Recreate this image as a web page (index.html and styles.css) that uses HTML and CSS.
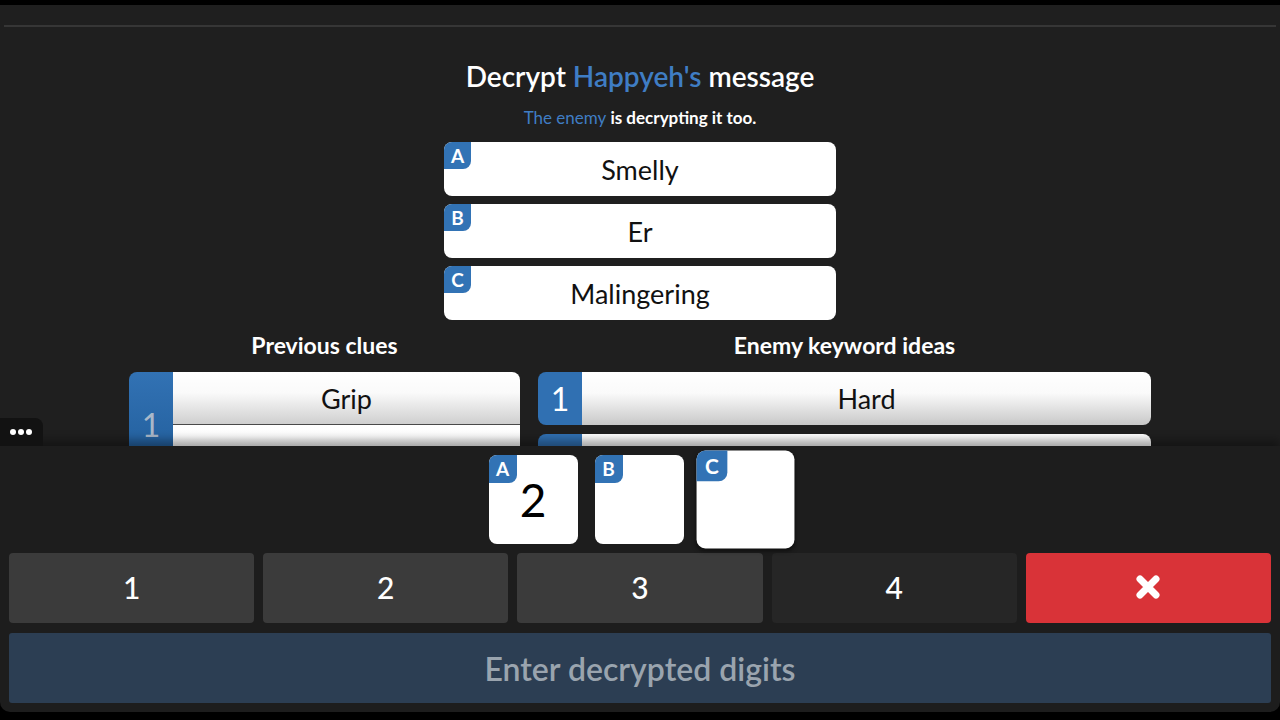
FILE: index.html
```html
<!DOCTYPE html>
<html lang="en">
<head>
  <meta charset="UTF-8">
  <title>Decrypt</title>
  <link rel="stylesheet" href="styles.css">
</head>
<body>
  <div class="screen">
    <div class="topbar"></div>
    <div class="board">
      <hr class="divider">
      <h1 class="title">Decrypt <span class="blue">Happyeh's</span> message</h1>
      <p class="subtitle"><span class="blue light">The enemy</span> is decrypting it too.</p>

      <div class="clues">
        <div class="clue"><span class="badge">A</span>Smelly</div>
        <div class="clue"><span class="badge">B</span>Er</div>
        <div class="clue"><span class="badge">C</span>Malingering</div>
      </div>

      <div class="columns">
        <div class="col">
          <h2>Previous clues</h2>
          <div class="group">
            <div class="group-num">1</div>
            <div class="group-rows">
              <div class="row">Grip</div>
              <div class="row"></div>
            </div>
          </div>
        </div>
        <div class="col">
          <h2>Enemy keyword ideas</h2>
          <div class="idea"><span class="idea-num">1</span><span class="idea-text">Hard</span></div>
          <div class="idea"><span class="idea-num"></span><span class="idea-text"></span></div>
        </div>
      </div>
    </div>

    <div class="panel">
      <div class="more"><span></span><span></span><span></span></div>
      <div class="slots">
        <div class="slot"><span class="badge">A</span>2</div>
        <div class="slot"><span class="badge">B</span></div>
        <div class="slot hover"><span class="badge">C</span></div>
      </div>
      <div class="keypad">
        <button class="key">1</button>
        <button class="key">2</button>
        <button class="key">3</button>
        <button class="key used">4</button>
        <button class="key clear">
          <svg width="26" height="26" viewBox="0 0 26 26"><path d="M5 5 L21 21 M21 5 L5 21" stroke="#fff" stroke-width="7" stroke-linecap="round"/></svg>
        </button>
      </div>
      <button class="submit">Enter decrypted digits</button>
    </div>
  </div>
</body>
</html>
```

FILE: styles.css
```css
* {
  box-sizing: border-box;
}
html, body {
  margin: 0;
  height: 100%;
}
body {
  background: #000;
  font-family: Lato, "Open Sans", sans-serif;
  color: #fff;
  overflow: hidden;
}
.screen {
  height: 720px;
  display: flex;
  flex-direction: column;
}
.topbar {
  height: 5px;
  background: #000;
  flex: none;
}
.board {
  height: 441px;
  flex: none;
  overflow: hidden;
  background: #1f1f1f;
  padding: 20px 4px 0;
  text-align: center;
}
.divider {
  border: none;
  border-top: 2px solid #363636;
  margin: 0;
}
.blue {
  color: #3f7dc4;
}
.light {
  font-weight: 400;
}
.title {
  font-size: 28px;
  font-weight: 600;
  margin: 31px 0 0;
  line-height: 36px;
}
.subtitle {
  font-size: 17px;
  font-weight: 700;
  margin: 14px 0 0;
  line-height: 20px;
}
.clues {
  width: 392px;
  margin: 14px auto 0;
  display: flex;
  flex-direction: column;
  gap: 8px;
}
.clue {
  position: relative;
  height: 54px;
  background: #fff;
  border-radius: 8px;
  color: #111;
  font-size: 27px;
  line-height: 56px;
}
.badge {
  position: absolute;
  left: 0;
  top: 0;
  width: 27px;
  height: 27px;
  background: #3273b5;
  color: #fff;
  font-size: 19px;
  font-weight: 700;
  line-height: 27px;
  text-align: center;
  border-radius: 8px 0 8px 0;
}
.columns {
  display: grid;
  grid-template-columns: 391px 613px;
  gap: 18px;
  justify-content: center;
  margin-top: 12px;
}
.col h2 {
  font-size: 23px;
  font-weight: 700;
  margin: 0 0 14px;
  line-height: 26px;
}
.group {
  display: flex;
  border-radius: 8px;
  overflow: hidden;
}
.group-num {
  width: 44px;
  background: linear-gradient(#3272b4, #1f5b98);
  color: #a9b8c9;
  font-size: 32px;
  display: flex;
  align-items: flex-end;
  justify-content: center;
  padding-bottom: 34px;
}
.group-rows {
  flex: 1;
}
.row {
  height: 53px;
  background: linear-gradient(#fff, #fafafa 40%, #cfcfcf);
  color: #111;
  font-size: 27px;
  line-height: 54px;
  border-bottom: 1px solid #4a4a4a;
}
.idea {
  display: flex;
  height: 53px;
  margin-bottom: 9px;
  border-radius: 8px;
  overflow: hidden;
}
.idea-num {
  width: 44px;
  background: #3070b2;
  color: #fff;
  font-size: 32px;
  line-height: 54px;
}
.idea-text {
  flex: 1;
  background: linear-gradient(#fff, #fafafa 40%, #c8c8c8);
  color: #111;
  font-size: 27px;
  line-height: 54px;
}
.panel {
  position: relative;
  flex: none;
  height: 266px;
  background: #1d1d1d;
  border-radius: 0 0 10px 10px;
  padding: 9px 9px 0;
  box-shadow: 0 -6px 10px rgba(0, 0, 0, 0.35);
}
.more {
  position: absolute;
  left: 0;
  top: -28px;
  width: 43px;
  height: 28px;
  background: #121212;
  border-radius: 0 8px 0 0;
  display: flex;
  justify-content: center;
  align-items: center;
  gap: 2px;
  padding-right: 1px;
}
.more span {
  width: 6px;
  height: 6px;
  border-radius: 50%;
  background: #fff;
}
.slots {
  display: flex;
  justify-content: center;
  gap: 17px;
  height: 89px;
  padding-right: 2px;
}
.slot {
  position: relative;
  width: 89px;
  height: 89px;
  background: #fff;
  border-radius: 8px;
  color: #000;
  font-size: 46px;
  line-height: 90px;
  text-align: center;
}
.slot .badge {
  width: 28px;
  height: 28px;
  line-height: 28px;
}
.slot.hover {
  transform: scale(1.1);
  box-shadow: 0 2px 4px rgba(0, 0, 0, 0.5);
}
.keypad {
  display: grid;
  grid-template-columns: repeat(5, 1fr);
  gap: 9px;
  margin-top: 9px;
}
.key {
  height: 70px;
  border: none;
  border-radius: 4px;
  background: #3b3b3b;
  color: #fff;
  font-family: inherit;
  font-size: 30px;
  font-weight: 500;
  padding: 0 0 2px;
}
.key.used {
  background: #262626;
}
.key.clear {
  background: #d93338;
  display: flex;
  align-items: center;
  justify-content: center;
}
.submit {
  width: 100%;
  height: 70px;
  margin-top: 10px;
  border: none;
  border-radius: 3px;
  background: #2c3e53;
  color: #9aa4ae;
  font-family: inherit;
  font-size: 32px;
  font-weight: 600;
}
```
